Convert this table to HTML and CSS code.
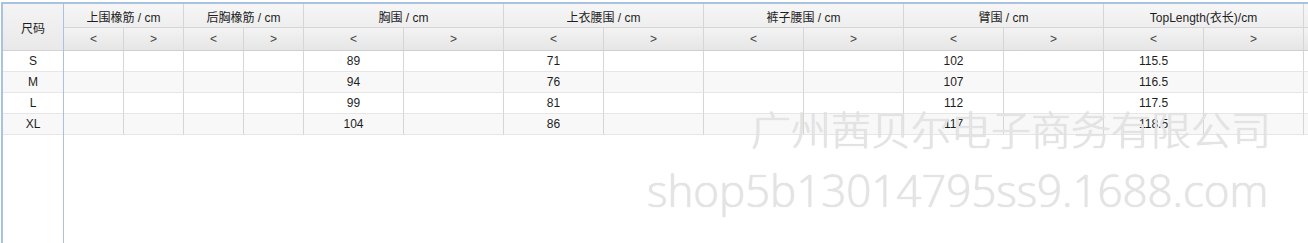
FILE: index.html
```html
<!DOCTYPE html>
<html lang="zh-CN">
<head>
<meta charset="utf-8">
<title>尺码表</title>
<link rel="stylesheet" href="styles.css">
</head>
<body>
<div class="frame">
  <div class="side">
    <div class="side-head">尺码</div>
    <div class="side-cell">S</div>
    <div class="side-cell alt">M</div>
    <div class="side-cell">L</div>
    <div class="side-cell alt">XL</div>
  </div>
  <div class="main">
    <div class="grid">
      <div class="h1 span2">上围橡筋 / cm</div>
      <div class="h1 span2">后胸橡筋 / cm</div>
      <div class="h1 span2">胸围 / cm</div>
      <div class="h1 span2">上衣腰围 / cm</div>
      <div class="h1 span2">裤子腰围 / cm</div>
      <div class="h1 span2">臂围 / cm</div>
      <div class="h1 span2">TopLength(衣长)/cm</div>
      <div class="h1 fill"></div>

      <div class="h2">&lt;</div><div class="h2">&gt;</div>
      <div class="h2">&lt;</div><div class="h2">&gt;</div>
      <div class="h2">&lt;</div><div class="h2">&gt;</div>
      <div class="h2">&lt;</div><div class="h2">&gt;</div>
      <div class="h2">&lt;</div><div class="h2">&gt;</div>
      <div class="h2">&lt;</div><div class="h2">&gt;</div>
      <div class="h2">&lt;</div><div class="h2">&gt;</div>
      <div class="h2 fill"></div>

      <div class="c"></div><div class="c"></div><div class="c"></div><div class="c"></div>
      <div class="c">89</div><div class="c"></div>
      <div class="c">71</div><div class="c"></div>
      <div class="c"></div><div class="c"></div>
      <div class="c">102</div><div class="c"></div>
      <div class="c">115.5</div><div class="c"></div>
      <div class="c fill"></div>

      <div class="c alt"></div><div class="c alt"></div><div class="c alt"></div><div class="c alt"></div>
      <div class="c alt">94</div><div class="c alt"></div>
      <div class="c alt">76</div><div class="c alt"></div>
      <div class="c alt"></div><div class="c alt"></div>
      <div class="c alt">107</div><div class="c alt"></div>
      <div class="c alt">116.5</div><div class="c alt"></div>
      <div class="c alt fill"></div>

      <div class="c"></div><div class="c"></div><div class="c"></div><div class="c"></div>
      <div class="c">99</div><div class="c"></div>
      <div class="c">81</div><div class="c"></div>
      <div class="c"></div><div class="c"></div>
      <div class="c">112</div><div class="c"></div>
      <div class="c">117.5</div><div class="c"></div>
      <div class="c fill"></div>

      <div class="c alt"></div><div class="c alt"></div><div class="c alt"></div><div class="c alt"></div>
      <div class="c alt">104</div><div class="c alt"></div>
      <div class="c alt">86</div><div class="c alt"></div>
      <div class="c alt"></div><div class="c alt"></div>
      <div class="c alt">117</div><div class="c alt"></div>
      <div class="c alt">118.5</div><div class="c alt"></div>
      <div class="c alt fill"></div>
    </div>
  </div>
</div>
<div class="mark mark-cn">广州茜贝尔电子商务有限公司</div>
<div class="mark mark-url">shop5b13014795ss9.1688.com</div>
</body>
</html>
```

FILE: styles.css
```css
html, body {
  margin: 0;
  padding: 0;
  background: #ffffff;
}

body {
  position: relative;
  width: 1308px;
  height: 243px;
  overflow: hidden;
  font-family: "Liberation Sans", "Noto Sans CJK SC", sans-serif;
  font-size: 12px;
  color: #1e1e1e;
}

.frame {
  margin: 2px 0 0 1px;
  height: 239px;
  border-top: 2px solid #a9c2dd;
  border-left: 2px solid #a9c2dd;
  display: flex;
}

.side {
  width: 60px;
  flex: none;
  border-right: 1px solid #a9c2dd;
  display: flex;
  flex-direction: column;
}

.side-head {
  height: 46px;
  border-bottom: 1px solid #d3d3d3;
  background: linear-gradient(#f4f4f4, #e9e9e9);
  display: flex;
  align-items: center;
  justify-content: center;
  font-family: "Noto Sans CJK SC", sans-serif;
}

.side-cell {
  height: 20px;
  border-bottom: 1px solid #e6e6e6;
  display: flex;
  align-items: center;
  justify-content: center;
  background: #ffffff;
}

.side-cell.alt,
.c.alt {
  background: #f8f8f8;
}

.main {
  flex: 1;
  min-width: 0;
}

.grid {
  display: grid;
  grid-template-columns: repeat(4, 60px) repeat(10, 100px) 1fr;
}

.grid > div {
  display: flex;
  align-items: center;
  justify-content: center;
  box-sizing: border-box;
  white-space: nowrap;
}

.span2 {
  grid-column: span 2;
}

.h1 {
  height: 24px;
  border-right: 1px solid #d6d6d6;
  border-bottom: 1px solid #d6d6d6;
  background: linear-gradient(#f6f6f6, #eeeeee);
  padding-top: 1px;
}

.h2 {
  height: 23px;
  border-right: 1px solid #d6d6d6;
  border-bottom: 1px solid #cfcfcf;
  background: linear-gradient(#f3f3f3, #e6e6e6);
  color: #444444;
}

.c {
  height: 21px;
  border-right: 1px solid #d6d6d6;
  border-bottom: 1px solid #e6e6e6;
  background: #ffffff;
}

.grid > .fill {
  border-right: none;
}

.mark {
  position: absolute;
  white-space: nowrap;
  line-height: 1;
  color: #e4e4e4;
  text-shadow: 0 0 1px #d2d2d2;
  pointer-events: none;
}

.mark-cn {
  left: 751px;
  top: 108px;
  font-family: "Noto Sans CJK SC", sans-serif;
  font-size: 40px;
  font-weight: 300;
}

.mark-url {
  left: 647px;
  top: 168px;
  font-family: "Open Sans", "Liberation Sans", sans-serif;
  font-size: 44px;
  font-weight: 300;
  letter-spacing: -0.1px;
}
```
